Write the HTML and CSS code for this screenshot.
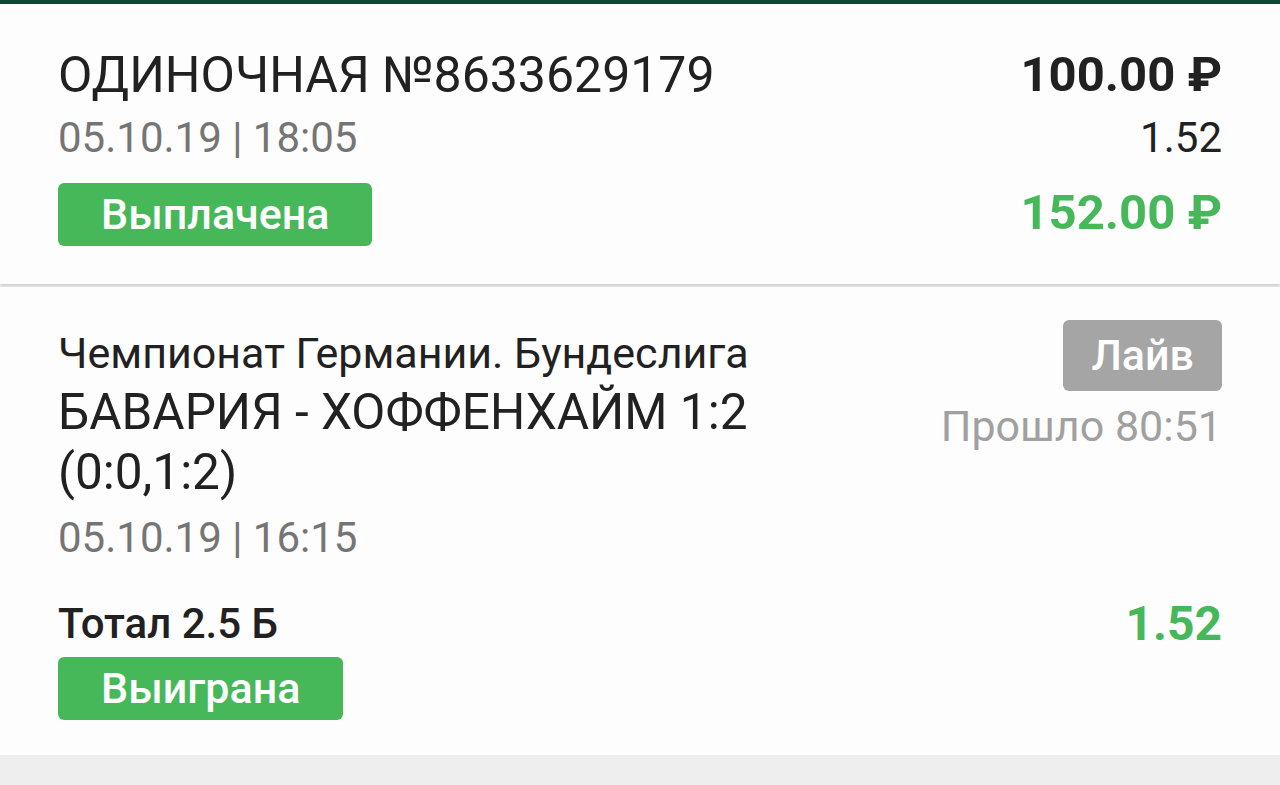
FILE: index.html
```html
<!DOCTYPE html>
<html lang="ru">
<head>
    <meta charset="UTF-8">
    <meta name="viewport" content="width=device-width, initial-scale=1.0">
    <title>Ставка №8633629179</title>
    <link rel="stylesheet" href="styles.css">
</head>
<body>
    <div class="top-bar"></div>

    <div class="card bet-card">
        <div class="bet-info">
            <div class="bet-title">ОДИНОЧНАЯ №8633629179</div>
            <div class="date">05.10.19 | 18:05</div>
            <span class="badge badge-green">Выплачена</span>
        </div>
        <div class="bet-sums">
            <div class="stake">100.00 ₽</div>
            <div class="coef">1.52</div>
            <div class="payout">152.00 ₽</div>
        </div>
    </div>

    <div class="card event-card">
        <div class="event-row">
            <div class="event-info">
                <div class="league">Чемпионат Германии. Бундеслига</div>
                <div class="teams">БАВАРИЯ - ХОФФЕНХАЙМ 1:2<br>(0:0,1:2)</div>
                <div class="date event-date">05.10.19 | 16:15</div>
            </div>
            <div class="event-status">
                <span class="badge badge-gray">Лайв</span>
                <div class="elapsed">Прошло 80:51</div>
            </div>
        </div>
        <div class="market-row">
            <div class="market-info">
                <div class="market">Тотал 2.5 Б</div>
                <span class="badge badge-green badge-small">Выиграна</span>
            </div>
            <div class="market-coef">1.52</div>
        </div>
    </div>
</body>
</html>
```

FILE: styles.css
```css
body {
    margin: 0;
    background-color: #eeeeee;
    font-family: Roboto, "Noto Sans", sans-serif;
    color: #212121;
}
.top-bar {
    height: 4px;
    background-color: #0b4a36;
}
.card {
    background-color: #fdfdfd;
    padding: 0 58px;
    box-shadow: 0 1px 3px rgba(0, 0, 0, 0.18);
}
.bet-card {
    display: flex;
    justify-content: space-between;
    padding-top: 41px;
    padding-bottom: 38px;
    margin-bottom: 3px;
}
.bet-title {
    font-size: 50px;
    line-height: 60px;
}
.date {
    font-size: 42px;
    line-height: 60px;
    color: #757575;
    margin-top: 3px;
}
.badge {
    display: inline-block;
    height: 63px;
    line-height: 63px;
    padding: 0 43px;
    border-radius: 6px;
    color: #ffffff;
    font-size: 43px;
    font-weight: 500;
}
.badge-green {
    background-color: #46b85a;
}
.bet-info .badge {
    margin-top: 15px;
}
.bet-sums {
    text-align: right;
}
.stake {
    font-size: 49px;
    line-height: 60px;
    font-weight: 700;
}
.coef {
    font-size: 42px;
    line-height: 60px;
    margin-top: 3px;
}
.payout {
    font-size: 49px;
    line-height: 60px;
    font-weight: 700;
    color: #46b85a;
    margin-top: 15px;
}
.event-card {
    padding-top: 33px;
    padding-bottom: 35px;
}
.event-row {
    display: flex;
    justify-content: space-between;
    align-items: flex-start;
}
.event-info {
    padding-top: 4px;
}
.league {
    font-size: 43px;
    line-height: 58px;
}
.teams {
    font-size: 49.5px;
    line-height: 60px;
}
.event-date {
    margin-top: 6px;
}
.event-status {
    text-align: right;
}
.badge-gray {
    background-color: #a5a5a5;
    height: 71px;
    line-height: 71px;
    padding: 0 28px;
}
.elapsed {
    font-size: 43px;
    line-height: 60px;
    color: #a0a0a0;
    margin-top: 5px;
}
.market-row {
    display: flex;
    justify-content: space-between;
    align-items: flex-start;
    margin-top: 31px;
}
.market {
    font-size: 42px;
    line-height: 50px;
    font-weight: 500;
}
.badge-small {
    margin-top: 8px;
}
.market-coef {
    font-size: 48px;
    line-height: 50px;
    font-weight: 700;
    color: #46b85a;
}
```
